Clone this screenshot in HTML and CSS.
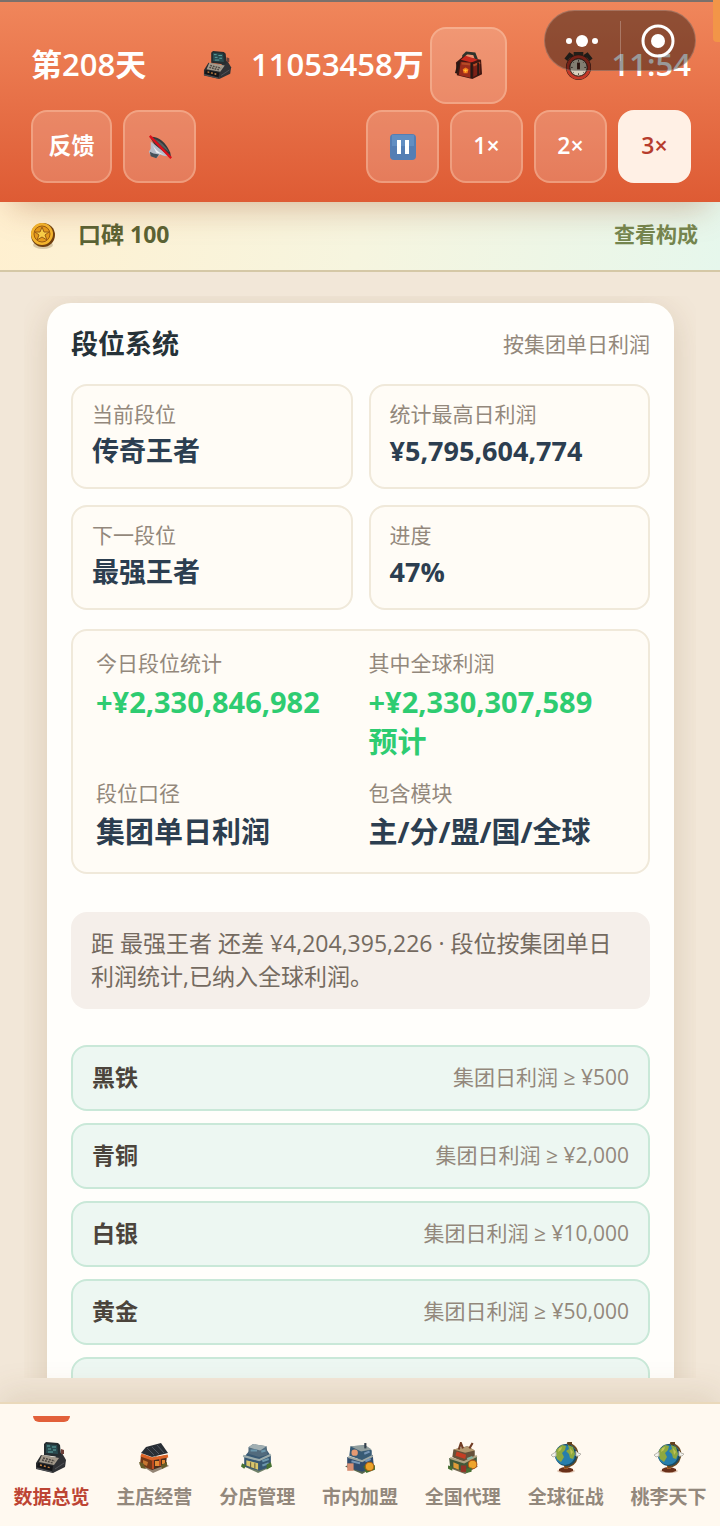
FILE: index.html
```html
<!DOCTYPE html>
<html lang="zh-CN">

<head>
    <meta charset="UTF-8">
    <meta name="viewport" content="width=device-width, initial-scale=1.0">
    <title>段位系统</title>
    <link rel="stylesheet" href="styles.css">
</head>

<body>
    <svg class="sprite" aria-hidden="true">
        <symbol id="register" viewBox="0 0 32 32">
            <path d="M1 21 6 13 21 16 18 31 1 27Z" fill="#2b2d2f" />
            <path d="M18 22 22 11 27 11 31 18 30 25 18 31Z" fill="#303236" />
            <path d="M26 7 29 8 29 12 26 12Z" fill="#6e4038" />
            <path d="M4 20 7 13 24 16 19 23Z" fill="#a39a8c" />
            <path d="M9 2 11 0 23 1 25 3 26 13 24 15 9 13Z" fill="#252d30" />
            <path d="M11 2 22 3 23 12 11 11Z" fill="#294b50" />
            <path d="M12 4h3M17 5h4M13 7h3M18 8h3M13 10h5" stroke="#62a9a4" stroke-width="1" />
            <path d="M8 16 20 19M7 18 18 21" stroke="#4b4641" stroke-width="1.5" stroke-dasharray="2 1" />
            <path d="M3 21 18 24 17 29 2 25Z" fill="#141518" />
            <path d="M5 23 16 26" stroke="#c68444" stroke-width="1.5" stroke-dasharray="2 2" />
            <path d="M1 26 17 30M20 27 29 21" stroke="#55565a" />
        </symbol>
        <symbol id="bag" viewBox="0 0 30 30">
            <path d="M10 8V5l3-3 8 1 2 5v3" fill="none" stroke="#2f332b" stroke-width="3" />
            <path d="M2 12 9 6 28 9 29 24 19 29 3 25Z" fill="#401711" />
            <path d="M7 11 18 12 18 28 5 25Z" fill="#9c2c1b" />
            <path d="M20 14 27 11 27 23 20 27Z" fill="#7c2116" />
            <path d="M7 9 12 5 25 9 18 12Z" fill="#c9291e" />
            <path d="M8 13 18 14M20 15 27 12" stroke="#b64b26" stroke-width="2" />
            <path d="M5 11 2 23M18 12v16M25 12v13" stroke="#251a16" stroke-width="2" />
            <path d="M12 17 15 19 14 23 10 23 9 19Z" fill="#f47a1c" />
            <path d="M12 19v3M10 20h4" stroke="#ffc33a" />
        </symbol>
        <symbol id="stopwatch" viewBox="0 0 30 30">
            <path d="M2 9 6 4 9 6M28 9 24 4 21 6" fill="none" stroke="#332d27" stroke-width="4" />
            <path d="M10 1h10v4h-3v3h-4V5h-3z" fill="#393229" />
            <circle cx="15" cy="17" r="13" fill="#2e211b" />
            <circle cx="15" cy="17" r="11" fill="none" stroke="#c43827" stroke-width="3" />
            <circle cx="15" cy="17" r="9" fill="#d9d0bd" stroke="#502c22" />
            <path d="M15 9v2M15 23v2M7 17h2M21 17h2M9 11l1 1M21 11l-1 1M9 23l1-1M21 23l-1-1" stroke="#514940" />
            <path d="M15 12v7" stroke="#472119" stroke-width="3" />
        </symbol>
        <symbol id="muted" viewBox="0 0 28 28">
            <path d="M3 3Q17 2 25 20L26 25Q12 21 3 3Z" fill="#343a3d" />
            <path d="M8 5Q18 9 24 20Q16 14 8 5Z" fill="#59605e" />
            <path d="M4 8 24 24Q18 24 14 22L10 26 4 23 2 19 4 16Z" fill="#b6bdc9" />
            <path d="M4 8Q8 18 19 23L10 20Z" fill="#edf0f4" />
            <path d="M3 19 7 21 13 22 10 26 4 24Z" fill="#45515a" />
            <path d="M3 2 26 26" stroke="#dc101a" stroke-width="2.5" />
        </symbol>
        <symbol id="pause" viewBox="0 0 26 26">
            <rect width="26" height="26" rx="4" fill="#547eb4" />
            <path d="M2 1h22v11H2z" fill="#6b9acb" opacity=".6" />
            <path d="M7 6h4v14H7zM15 6h4v14h-4z" fill="#fff" />
        </symbol>
        <symbol id="coin" viewBox="0 0 26 28">
            <ellipse cx="13" cy="23" rx="10" ry="4" fill="#806b40" opacity=".3" />
            <circle cx="13" cy="13" r="12" fill="#71400f" />
            <circle cx="12" cy="12" r="11" fill="#f4b52d" />
            <circle cx="12" cy="12" r="8" fill="#e59b1c" stroke="#9c5b12" />
            <path d="M12 5l2 5 5 0-4 3 2 5-5-3-5 3 2-5-4-3h5z" fill="#f9cf48" stroke="#9b5d16" />
        </symbol>
        <symbol id="shop" viewBox="0 0 32 32">
            <path d="M1 22 18 14 31 24 15 31Z" fill="#938575" />
            <path d="M3 13 15 17 14 28 2 23Z" fill="#743817" />
            <path d="M15 16 29 13 28 23 14 28Z" fill="#4b2d1c" />
            <path d="M3 13 14 17 30 14" fill="none" stroke="#dc6426" stroke-width="3" />
            <path d="M3 11 8 5 23 1 30 11 14 15Z" fill="#292e34" />
            <path d="M9 6 16 13M14 5 21 12M19 3 26 11" stroke="#515861" />
            <path d="M17 19h4v5h-4zM24 18h3v4h-3z" fill="#e28a35" />
            <path d="M5 18 10 20 9 24 5 22Z" fill="#c57631" />
            <path d="M1 20 5 21 8 27 3 26ZM23 23l6-3v4l-5 3z" fill="#665c28" />
            <path d="M15 18v9M22 17v7" stroke="#c04b20" stroke-width="2" />
        </symbol>
        <symbol id="branch" viewBox="0 0 30 30">
            <path d="M1 22 15 15 29 23 16 29Z" fill="#6f8068" />
            <path d="M3 14 8 8 23 6 28 13 28 23 17 27 3 23Z" fill="#375873" />
            <path d="M7 5 11 2 24 4 25 12 17 14 7 11Z" fill="#526b7d" />
            <path d="M7 5 11 2 24 4 18 8Z" fill="#a1afb2" />
            <path d="M2 13 17 17 28 12" fill="none" stroke="#9babaa" stroke-width="2" />
            <path d="M5 17 16 20 16 26 5 22Z" fill="#d8c66c" />
            <path d="M9 8h6M19 9l4-1M20 18l6-2M20 22l6-2" stroke="#6d98ad" stroke-width="2" />
            <path d="M9 19v5M13 20v5" stroke="#685d3d" />
            <path d="M1 20l4 2-2 3-3-2zM24 21l4-2 1 4-5 3z" fill="#487232" />
        </symbol>
        <symbol id="league" viewBox="0 0 30 30">
            <path d="M1 23 15 16 29 23 17 30Z" fill="#596950" />
            <path d="M3 14 17 17 27 12 28 24 17 28 3 24Z" fill="#314c6d" />
            <path d="M6 4 20 3 26 8 26 15 17 17 5 13Z" fill="#385b75" />
            <path d="M6 4 20 3 26 7 16 9Z" fill="#929f9e" />
            <path d="M4 14 17 18 27 13" fill="none" stroke="#a0a8a2" stroke-width="2" />
            <path d="M20 1v5" stroke="#34404c" stroke-width="2" />
            <circle cx="10" cy="10" r="3" fill="#e69a72" />
            <path d="M7 18l8 2M20 18l5-2M19 11l5-2" stroke="#7695b5" stroke-width="2" />
            <path d="M3 20h6v7H3z" fill="#d98f72" />
            <path d="M18 23l5-4 6 3v4l-8 3z" fill="#40702d" />
            <circle cx="24" cy="23" r="4" fill="#eba329" stroke="#aa6118" />
        </symbol>
        <symbol id="agency" viewBox="0 0 30 30">
            <path d="M1 24 15 17 29 23 17 30Z" fill="#756953" />
            <path d="M2 15 16 18 28 13 28 23 17 28 3 24Z" fill="#42593a" />
            <path d="M6 7 19 4 26 8 26 15 16 19 5 14Z" fill="#66513a" />
            <path d="M6 7 20 4 26 8 17 10Z" fill="#b59a70" />
            <path d="M3 15 16 19 28 13" fill="none" stroke="#b0a483" stroke-width="2" />
            <path d="M11 7 13 1 15 6M21 6 24 1" fill="none" stroke="#713d24" stroke-width="2" />
            <path d="M9 9l9 3-1 4-9-3z" fill="#c43e24" />
            <path d="M6 19l5 2v5l-5-2z" fill="#df9b38" />
            <path d="M13 22h5v6h-5z" fill="#943326" />
            <path d="M19 16l5-2" stroke="#82b4a0" stroke-width="2" />
            <circle cx="24" cy="21" r="4" fill="#efa52b" stroke="#ae5617" />
            <path d="M1 22l4 1v4l-4-2zM18 25l5-1v4l-5 1z" fill="#477033" />
        </symbol>
        <symbol id="globe" viewBox="0 0 32 32">
            <ellipse cx="16" cy="29" rx="9" ry="2" fill="#c39677" opacity=".5" />
            <path d="M9 27q6-4 14 0v2q-7 3-14 0z" fill="#6a3019" />
            <path d="M14 23h4v4h-4z" fill="#a45b25" />
            <path d="M17 1q12 3 10 14-2 9-12 10" fill="none" stroke="#6a4a22" stroke-width="2" />
            <circle cx="16" cy="13" r="11" fill="#174b62" />
            <circle cx="15" cy="13" r="10" fill="#277eac" />
            <path d="M7 7l5-4 4 1-1 4-3 3 2 4-3 5-4-3-2-6zM18 3l5 2 2 7-2 5-3-1-1-4-3-3 3-2z" fill="#8da83e" />
            <path d="M9 6l3-1-1 3-3 2zM20 6l3 4-2 3z" fill="#c1c457" />
            <path d="M1 13 4 11 6 10 6 14 3 15ZM31 12 28 11 26 9 26 14 29 14Z" fill="#f2f3ee" stroke="#bab7ae" />
            <path d="M18 0h4v3h-4z" fill="#62421f" />
        </symbol>
    </svg>

    <header class="top">
        <div class="status">
            <span class="day">第208天</span>
            <div class="money">
                <svg class="icon">
                    <use href="#register" />
                </svg>
                <span class="amount">11053458万</span>
                <button class="btn bag" aria-label="背包">
                    <svg class="icon">
                        <use href="#bag" />
                    </svg>
                </button>
            </div>
            <div class="clock">
                <svg class="icon">
                    <use href="#stopwatch" />
                </svg>
                <time>11:54</time>
            </div>
        </div>
        <div class="controls">
            <button class="btn feedback">反馈</button>
            <button class="btn" aria-label="声音">
                <svg class="icon small">
                    <use href="#muted" />
                </svg>
            </button>
            <div class="speed">
                <button class="btn" aria-label="暂停">
                    <svg class="icon small">
                        <use href="#pause" />
                    </svg>
                </button>
                <button class="btn">1×</button>
                <button class="btn">2×</button>
                <button class="btn on">3×</button>
            </div>
        </div>
        <div class="capsule">
            <button class="capsule-btn" aria-label="更多">
                <svg class="dots" viewBox="0 0 34 12">
                    <circle cx="4" cy="6" r="3" />
                    <circle cx="17" cy="6" r="6" />
                    <circle cx="30" cy="6" r="3" />
                </svg>
            </button>
            <button class="capsule-btn" aria-label="关闭">
                <svg class="target" viewBox="0 0 34 34">
                    <circle cx="17" cy="17" r="15" fill="none" stroke="#fff" stroke-width="3" />
                    <circle cx="17" cy="17" r="7" />
                </svg>
            </button>
        </div>
        <i class="corner"></i>
    </header>

    <section class="fame">
        <svg class="coin">
            <use href="#coin" />
        </svg>
        <strong>口碑 100</strong>
        <a class="more" href="#">查看构成</a>
    </section>

    <main class="content">
        <section class="card">
            <div class="card-head">
                <h2>段位系统</h2>
                <span>按集团单日利润</span>
            </div>
            <dl class="tiles">
                <div class="tile">
                    <dt>当前段位</dt>
                    <dd>传奇王者</dd>
                </div>
                <div class="tile">
                    <dt>统计最高日利润</dt>
                    <dd>¥5,795,604,774</dd>
                </div>
                <div class="tile">
                    <dt>下一段位</dt>
                    <dd>最强王者</dd>
                </div>
                <div class="tile">
                    <dt>进度</dt>
                    <dd>47%</dd>
                </div>
            </dl>
            <dl class="summary">
                <div>
                    <dt>今日段位统计</dt>
                    <dd class="up">+¥2,330,846,982</dd>
                </div>
                <div>
                    <dt>其中全球利润</dt>
                    <dd class="up">+¥2,330,307,589 预计</dd>
                </div>
                <div>
                    <dt>段位口径</dt>
                    <dd>集团单日利润</dd>
                </div>
                <div>
                    <dt>包含模块</dt>
                    <dd>主/分/盟/国/全球</dd>
                </div>
            </dl>
            <p class="tip">距 最强王者 还差 ¥4,204,395,226 · 段位按集团单日利润统计,已纳入全球利润。</p>
            <ul class="ranks">
                <li class="rank"><b>黑铁</b><span>集团日利润 ≥ ¥500</span></li>
                <li class="rank"><b>青铜</b><span>集团日利润 ≥ ¥2,000</span></li>
                <li class="rank"><b>白银</b><span>集团日利润 ≥ ¥10,000</span></li>
                <li class="rank"><b>黄金</b><span>集团日利润 ≥ ¥50,000</span></li>
                <li class="rank"></li>
            </ul>
        </section>
    </main>

    <nav class="tabs">
        <a class="tab on" href="#">
            <svg class="tab-icon">
                <use href="#register" />
            </svg>
            数据总览
        </a>
        <a class="tab" href="#">
            <svg class="tab-icon">
                <use href="#shop" />
            </svg>
            主店经营
        </a>
        <a class="tab" href="#">
            <svg class="tab-icon">
                <use href="#branch" />
            </svg>
            分店管理
        </a>
        <a class="tab" href="#">
            <svg class="tab-icon">
                <use href="#league" />
            </svg>
            市内加盟
        </a>
        <a class="tab" href="#">
            <svg class="tab-icon">
                <use href="#agency" />
            </svg>
            全国代理
        </a>
        <a class="tab" href="#">
            <svg class="tab-icon">
                <use href="#globe" />
            </svg>
            全球征战
        </a>
        <a class="tab" href="#">
            <svg class="tab-icon">
                <use href="#globe" />
            </svg>
            桃李天下
        </a>
    </nav>
</body>

</html>
```
FILE: styles.css
```css
* {
    margin: 0;
    padding: 0;
    box-sizing: border-box;
}

ul {
    list-style: none;
}

a {
    text-decoration: none;
}

button {
    border: 0;
    background: none;
    color: inherit;
    font: inherit;
}

body {
    height: 100vh;
    display: flex;
    flex-direction: column;
    background: #f2e7d8;
    font-family: "Open Sans", "Noto Sans CJK SC", sans-serif;
}

.sprite {
    position: absolute;
    width: 0;
    height: 0;
}

.icon {
    width: 29px;
    height: 29px;
    display: block;
}

.icon.small {
    width: 26px;
    height: 26px;
}

/* header */
.top {
    position: relative;
    z-index: 1;
    padding: 25px 29px 19px 31px;
    border-top: 2px solid #7b706b;
    background: linear-gradient(#f0865b, #de5b34);
    box-shadow: 0 16px 32px -12px rgba(150, 60, 20, 0.35);
    color: #fff;
}

.status {
    display: flex;
    align-items: center;
    justify-content: space-between;
    font-size: 31px;
    line-height: 40px;
    font-weight: 600;
}

.day,
.amount,
time {
    padding-bottom: 4px;
}

.money,
.clock {
    display: flex;
    align-items: center;
}

.money .icon,
.clock .icon {
    margin-right: 19px;
}

.btn {
    width: 73px;
    height: 73px;
    display: flex;
    align-items: center;
    justify-content: center;
    padding-bottom: 4px;
    border: 2px solid rgba(255, 215, 185, 0.35);
    border-radius: 16px;
    background: rgba(255, 255, 255, 0.18);
    font-size: 23px;
    line-height: 30px;
    font-weight: 600;
}

.btn[aria-label] {
    padding-bottom: 0;
}

.btn.on {
    border-color: #fff0e5;
    background: #fff0e5;
    color: #b63c2c;
}

.btn.bag {
    width: 77px;
    height: 77px;
    margin-left: 6px;
}

.btn.bag .icon {
    margin: 0;
}

.btn.feedback {
    width: 81px;
}

.controls,
.speed {
    display: flex;
    gap: 11px;
}

.controls {
    margin-top: 6px;
}

.speed {
    margin-left: auto;
}

/* floats over the header */
.capsule {
    position: absolute;
    top: 8px;
    right: 24px;
    width: 152px;
    height: 61px;
    display: flex;
    align-items: center;
    border: 1px solid rgba(255, 255, 255, 0.2);
    border-radius: 31px;
    background: rgba(0, 0, 0, 0.4);
}

.capsule-btn {
    flex: 1;
    height: 40px;
    display: flex;
    align-items: center;
    justify-content: center;
    fill: #fff;
}

.capsule-btn + .capsule-btn {
    border-left: 1px solid rgba(255, 255, 255, 0.25);
}

.dots {
    width: 34px;
    height: 12px;
}

.target {
    width: 34px;
    height: 34px;
}

.corner {
    position: absolute;
    top: -2px;
    right: 0;
    width: 7px;
    height: 42px;
    border-radius: 0 0 0 4px;
    background: #f29548;
}

/* reputation bar */
.fame {
    display: flex;
    align-items: center;
    height: 70px;
    padding: 0 22px 0 30px;
    border-bottom: 2px solid #d5c8a6;
    background: linear-gradient(100deg, #fff0d0, #f6f5df 50%, #e6f7ec);
    color: #5b6334;
    font-size: 23px;
    line-height: 30px;
}

.fame strong,
.more {
    padding-bottom: 4px;
}

.coin {
    width: 26px;
    height: 28px;
    margin-right: 22px;
}

.more {
    margin-left: auto;
    color: #75864f;
    font-size: 21px;
    font-weight: 600;
}

/* the part that scrolls */
.content {
    flex: 1;
    min-height: 0;
    margin: 24px;
    padding: 7px 22px 0 23px;
    overflow-y: auto;
    scrollbar-width: none;
}

.card {
    padding: 24px;
    border-radius: 24px;
    background: #fffefb;
    box-shadow: 0 8px 32px rgba(120, 85, 40, 0.2);
}

.card-head {
    display: flex;
    align-items: center;
    justify-content: space-between;
    margin-bottom: 23px;
    color: #93887c;
    font-size: 21px;
    line-height: 34px;
}

.card-head h2 {
    color: #263238;
    font-size: 27px;
    font-weight: 700;
}

dt {
    color: #93887c;
    font-size: 21px;
    line-height: 30px;
}

dd {
    color: #2c3e50;
    font-weight: 700;
    line-height: 40px;
}

.tiles {
    display: grid;
    grid-template-columns: 1fr 1fr;
    gap: 16px;
}

.tile {
    padding: 13px 19px 16px;
    border: 2px solid #f0e9da;
    border-radius: 16px;
    background: #fffcf6;
}

.tile dd {
    margin-top: 2px;
    font-size: 27px;
}

.summary {
    display: grid;
    grid-template-columns: 1fr 1fr;
    gap: 16px;
    margin-top: 19px;
    padding: 17px 23px 20px;
    border: 2px solid #f0e9da;
    border-radius: 16px;
    background: #fffcf6;
}

.summary dd {
    margin-top: 4px;
    font-size: 29px;
}

.summary .up {
    color: #2ecc71;
}

.tip {
    margin-top: 38px;
    padding: 15px 20px 16px;
    border-radius: 16px;
    background: #f5efea;
    color: #746a60;
    font-size: 23px;
    line-height: 33px;
}

.ranks {
    display: grid;
    gap: 12px;
    margin-top: 36px;
}

.rank {
    display: flex;
    align-items: center;
    justify-content: space-between;
    height: 66px;
    padding: 0 19px 2px;
    border: 2px solid #c9e8d8;
    border-radius: 16px;
    background: #edf7f2;
    color: #93887c;
    font-size: 21px;
    line-height: 30px;
}

.rank b {
    color: #4b443c;
    font-size: 23px;
}

/* bottom tabs */
.tabs {
    display: flex;
    padding-top: 12px;
    border-top: 2px solid #ead9bb;
    background: #fff9f0;
    box-shadow: 0 -8px 32px rgba(120, 85, 40, 0.15);
}

.tab {
    position: relative;
    flex: 1;
    display: flex;
    flex-direction: column;
    align-items: center;
    padding: 26px 0 15px;
    color: #93887c;
    font-size: 19px;
    line-height: 28px;
    font-weight: 600;
}

.tab.on {
    color: #bd4433;
}

.tab.on::before {
    content: "";
    position: absolute;
    top: 0;
    width: 37px;
    height: 6px;
    border-radius: 0 0 6px 6px;
    background: #e2603a;
}

.tab-icon {
    width: 32px;
    height: 32px;
    margin-bottom: 9px;
}
```
